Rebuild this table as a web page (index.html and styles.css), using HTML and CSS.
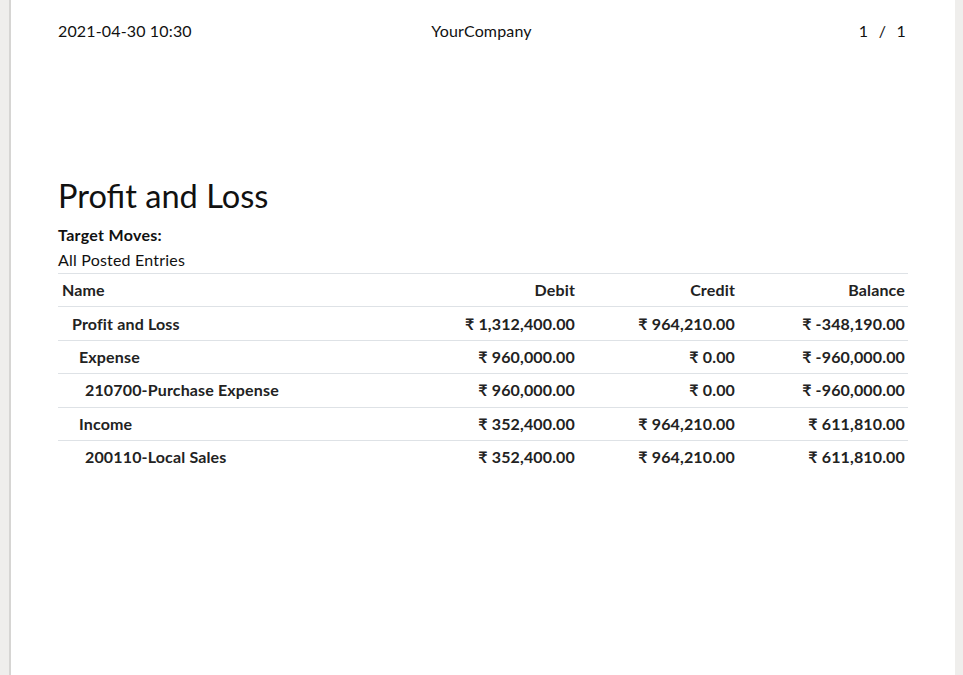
FILE: index.html
```html
<!DOCTYPE html>
<html>
<head>
<meta charset="utf-8">
<link rel="stylesheet" href="styles.css">
</head>
<body>
<div class="viewer">
  <div class="page">
    <div class="header">
      <span class="h-left">2021-04-30 10:30</span>
      <span class="h-center">YourCompany</span>
      <span class="h-right">1 &nbsp;/ &nbsp;1</span>
    </div>
    <h2 class="title">Profit and Loss</h2>
    <div class="meta-label">Target Moves:</div>
    <div class="meta-value">All Posted Entries</div>
    <table class="report">
      <colgroup>
        <col class="c-name"><col class="c-debit"><col class="c-credit"><col class="c-bal">
      </colgroup>
      <thead>
        <tr><th>Name</th><th class="num">Debit</th><th class="num">Credit</th><th class="num">Balance</th></tr>
      </thead>
      <tbody>
        <tr><td class="lvl1">Profit and Loss</td><td class="num">₹&nbsp;1,312,400.00</td><td class="num">₹&nbsp;964,210.00</td><td class="num">₹&nbsp;-348,190.00</td></tr>
        <tr><td class="lvl2">Expense</td><td class="num">₹&nbsp;960,000.00</td><td class="num">₹&nbsp;0.00</td><td class="num">₹&nbsp;-960,000.00</td></tr>
        <tr><td class="lvl3">210700-Purchase Expense</td><td class="num">₹&nbsp;960,000.00</td><td class="num">₹&nbsp;0.00</td><td class="num">₹&nbsp;-960,000.00</td></tr>
        <tr><td class="lvl2">Income</td><td class="num">₹&nbsp;352,400.00</td><td class="num">₹&nbsp;964,210.00</td><td class="num">₹&nbsp;611,810.00</td></tr>
        <tr><td class="lvl3">200110-Local Sales</td><td class="num">₹&nbsp;352,400.00</td><td class="num">₹&nbsp;964,210.00</td><td class="num">₹&nbsp;611,810.00</td></tr>
      </tbody>
    </table>
  </div>
</div>
</body>
</html>
```
FILE: styles.css
```css
html, body {
  margin: 0;
  padding: 0;
  height: 100%;
}
body {
  background: #efeeec;
  font-family: Lato, "Noto Sans", sans-serif;
  color: #111;
  overflow: hidden;
}
.viewer {
  height: 100%;
  padding-left: 9px;
}
.page {
  box-sizing: border-box;
  width: 946px;
  height: 100%;
  background: #fff;
  border-left: 2px solid #d6d5d3;
  padding: 19px 47px 0 47px;
}
.header {
  display: flex;
  justify-content: space-between;
  font-size: 16px;
  line-height: 24px;
  color: #111;
  letter-spacing: 0.15px;
}
.h-left, .h-right { width: 200px; }
.h-right {
  text-align: right;
  padding-right: 2px;
  box-sizing: border-box;
  word-spacing: 1px;
}
.h-center { text-align: center; flex: 1; padding-right: 3px; }
.title {
  font-size: 32.6px;
  font-weight: 400;
  line-height: 38px;
  margin: 134px 0 8px 0;
  color: #111;
}
.meta-label {
  font-weight: 700;
  font-size: 16px;
  letter-spacing: 0.3px;
  line-height: 24px;
}
.meta-value {
  font-size: 16px;
  letter-spacing: 0.2px;
  line-height: 26px;
}
.report {
  width: 100%;
  border-collapse: collapse;
  font-size: 16px;
  line-height: 24px;
  table-layout: fixed;
}
.report th, .report td {
  font-weight: 700;
  padding: 4.2px 3px 4.2px 4px;
  border-top: 1px solid #dee2e6;
  text-align: left;
  color: #222;
  letter-spacing: 0.15px;
}
.report thead th {
  padding-top: 3.7px;
  padding-bottom: 4.7px;
}
.report .num { text-align: right; }
.c-name { width: 360px; }
.c-debit { width: 160px; }
.c-credit { width: 160px; }
.c-bal { width: 170px; }
.report td.lvl1 { padding-left: 14px; }
.report td.lvl2 { padding-left: 21px; }
.report td.lvl3 { padding-left: 27px; }
```
